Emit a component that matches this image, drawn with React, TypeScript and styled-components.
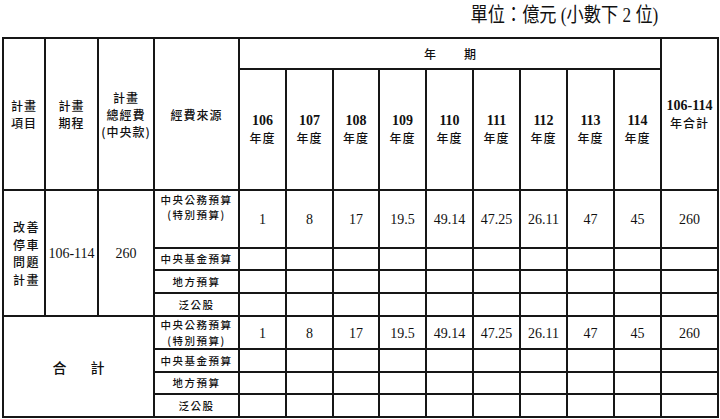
import * as React from "react"
import styled, { createGlobalStyle } from "styled-components"

const GlobalStyle = createGlobalStyle`
  html, body {
    margin: 0;
    padding: 0;
    background: #fff;
  }
`

const Page = styled.div`
  width: 720px;
  height: 419px;
  padding-left: 2px;
  box-sizing: border-box;
  overflow: hidden;
  font-family: "Liberation Serif", "Noto Sans CJK TC", serif;
  color: #111;
`

const UnitBar = styled.div`
  height: 37px;
  box-sizing: border-box;
  padding: 1px 62px 0 0;
  text-align: right;
`

const UnitText = styled.span`
  display: inline-block;
  font-size: 20px;
  line-height: 28px;
  transform: scaleX(0.86);
  transform-origin: right center;
`

const Table = styled.table`
  border-collapse: collapse;
  table-layout: fixed;
  width: 717px;
`

const Row = styled.tr<{ $h: number }>`
  height: ${p => p.$h}px;
`

const Cell = styled.td<{ $top?: boolean }>`
  border: 2px solid #161616;
  padding: 0;
  text-align: center;
  vertical-align: ${p => (p.$top ? "top" : "middle")};
  padding-top: ${p => (p.$top ? "1px" : "0")};
`

const HeadText = styled.div`
  font-family: "Noto Sans CJK TC", sans-serif;
  font-size: 12px;
  font-weight: 500;
  line-height: 17px;
  letter-spacing: 1px;
`

const YearNum = styled.div`
  font-family: "Liberation Serif", serif;
  font-weight: bold;
  font-size: 14px;
  line-height: 16px;
`

const Spread = styled.div<{ $gap: number; $size: number }>`
  display: flex;
  justify-content: center;
  gap: ${p => p.$gap}px;
  font-family: "Noto Sans CJK TC", sans-serif;
  font-size: ${p => p.$size}px;
  font-weight: 500;
`

const Source = styled.div`
  font-family: "Noto Sans CJK TC", sans-serif;
  font-size: 10.5px;
  font-weight: 500;
  line-height: 15.2px;
  letter-spacing: 1.5px;
`

const Num = styled.span`
  font-family: "Liberation Serif", serif;
  font-size: 14px;
`

const Vertical = styled.div`
  font-family: "Noto Sans CJK TC", sans-serif;
  font-size: 12px;
  font-weight: 500;
  line-height: 17.5px;
  letter-spacing: 1.5px;
  padding-left: 5px;
`

const widths = [42, 53, 56, 85, 47, 47, 46, 47, 47, 47, 47, 47, 47, 57]
const years = ["106", "107", "108", "109", "110", "111", "112", "113", "114"]
const values = ["1", "8", "17", "19.5", "49.14", "47.25", "26.11", "47", "45", "260"]
const others = ["中央基金預算", "地方預算", "泛公股"]

const Blanks = () => (
  <>
    {values.map((_, i) => (
      <Cell key={i} />
    ))}
  </>
)

const Values = () => (
  <>
    {values.map((v, i) => (
      <Cell key={i}>
        <Num>{v}</Num>
      </Cell>
    ))}
  </>
)

export default function App() {
  return (
    <Page>
      <GlobalStyle />
      <UnitBar>
        <UnitText>單位：億元 (小數下 2 位)</UnitText>
      </UnitBar>
      <Table>
        <colgroup>
          {widths.map((w, i) => (
            <col key={i} style={{ width: w }} />
          ))}
        </colgroup>
        <tbody>
          <Row $h={31}>
            <Cell rowSpan={2}>
              <HeadText>計畫<br />項目</HeadText>
            </Cell>
            <Cell rowSpan={2}>
              <HeadText>計畫<br />期程</HeadText>
            </Cell>
            <Cell rowSpan={2}>
              <HeadText>計畫<br />總經費<br />(中央款)</HeadText>
            </Cell>
            <Cell rowSpan={2}>
              <HeadText>經費來源</HeadText>
            </Cell>
            <Cell colSpan={9}>
              <Spread $gap={28} $size={12}>
                <span>年</span>
                <span>期</span>
              </Spread>
            </Cell>
            <Cell rowSpan={2}>
              <YearNum>106-114</YearNum>
              <HeadText>年合計</HeadText>
            </Cell>
          </Row>
          <Row $h={121}>
            {years.map(y => (
              <Cell key={y}>
                <YearNum>{y}</YearNum>
                <HeadText>年度</HeadText>
              </Cell>
            ))}
          </Row>

          <Row $h={58}>
            <Cell rowSpan={4}>
              <Vertical>改善<br />停車<br />問題<br />計畫</Vertical>
            </Cell>
            <Cell rowSpan={4}>
              <Num>106-114</Num>
            </Cell>
            <Cell rowSpan={4}>
              <Num>260</Num>
            </Cell>
            <Cell $top>
              <Source>中央公務預算<br />(特別預算)</Source>
            </Cell>
            <Values />
          </Row>
          {others.map((s, i) => (
            <Row key={s} $h={i === 0 ? 22 : 23}>
              <Cell>
                <Source>{s}</Source>
              </Cell>
              <Blanks />
            </Row>
          ))}

          <Row $h={33}>
            <Cell colSpan={3} rowSpan={4}>
              <Spread $gap={24} $size={14}>
                <span>合</span>
                <span>計</span>
              </Spread>
            </Cell>
            <Cell>
              <Source>中央公務預算<br />(特別預算)</Source>
            </Cell>
            <Values />
          </Row>
          {others.map((s, i) => (
            <Row key={s} $h={i === 1 ? 22 : 23}>
              <Cell>
                <Source>{s}</Source>
              </Cell>
              <Blanks />
            </Row>
          ))}
        </tbody>
      </Table>
    </Page>
  )
}
